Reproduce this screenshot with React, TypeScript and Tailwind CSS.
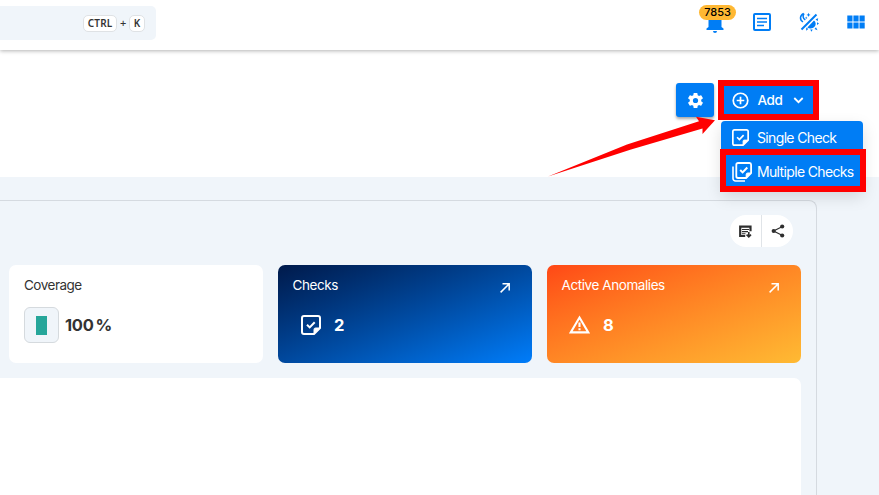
import type { ReactNode } from "react";

type IconProps = { className?: string };

function CheckNote({ className }: IconProps) {
  return (
    <svg viewBox="0 0 20 20" fill="none" stroke="currentColor" strokeWidth="2" strokeLinejoin="round" className={className}>
      <path d="M3 1h14a2 2 0 0 1 2 2v10l-6 6H3a2 2 0 0 1-2-2V3a2 2 0 0 1 2-2Z" />
      <path d="M13 19v-4.500a1.500 1.500 0 0 1 1.500-1.500H19Z" fill="currentColor" strokeWidth="1" />
      <path d="m6 9.700 2.700 2.700 5-5.200" strokeLinejoin="miter" />
    </svg>
  );
}

function StackedNote({ className }: IconProps) {
  return (
    <svg viewBox="0 0 20 20" fill="none" stroke="currentColor" strokeWidth="1.800" strokeLinejoin="round" className={className}>
      <path d="M6 1h11.500A1.700 1.700 0 0 1 19.100 2.700V11l-5 5H6a1.700 1.700 0 0 1-1.700-1.700V2.700A1.700 1.700 0 0 1 6 1Z" />
      <path d="M14.200 16v-3.500a1.500 1.500 0 0 1 1.500-1.500h3.400Z" fill="currentColor" strokeWidth="1" />
      <path d="m8.200 8 2.400 2.400 4.700-4.900" strokeLinejoin="miter" strokeWidth="2" />
      <path d="M1 4.500v12A2.500 2.500 0 0 0 3.500 19H13" strokeWidth="1.600" />
    </svg>
  );
}

function Gear({ className }: IconProps) {
  return (
    <svg viewBox="0 0 24 24" fill="currentColor" className={className}>
      <path d="M19.140 12.940c.04-.3.06-.61.06-.94 0-.32-.02-.64-.07-.94l2.030-1.580a.49.49 0 0 0 .12-.61l-1.920-3.320a.49.49 0 0 0-.59-.22l-2.390.96c-.5-.38-1.030-.7-1.620-.94l-.36-2.540a.48.48 0 0 0-.48-.41h-3.840a.48.48 0 0 0-.47.41l-.36 2.540c-.59.24-1.130.57-1.620.94l-2.390-.96a.48.48 0 0 0-.59.22L2.740 8.870a.48.48 0 0 0 .12.61l2.030 1.580c-.05.3-.09.63-.09.94s.02.64.07.94l-2.030 1.580a.49.49 0 0 0-.12.61l1.920 3.320c.12.22.37.29.59.22l2.390-.96c.5.38 1.030.7 1.620.94l.36 2.540c.05.24.24.41.48.41h3.840c.24 0 .44-.17.47-.41l.36-2.540c.59-.24 1.130-.56 1.620-.94l2.390.96c.22.08.47 0 .59-.22l1.920-3.320a.48.48 0 0 0-.12-.61l-2.010-1.580ZM12 15.300A3.300 3.300 0 1 1 12 8.700a3.300 3.300 0 0 1 0 6.600Z" />
    </svg>
  );
}

function ArrowOut() {
  return (
    <svg viewBox="0 0 12 12" fill="none" stroke="currentColor" strokeWidth="1.500" className="mt-[17px] mr-[21px] size-3 shrink-0">
      <path d="M3.500 1.800h6.700v6.700M10 2 1.600 10.400" />
    </svg>
  );
}

function ThemeIcon() {
  return (
    <svg viewBox="0 0 20 20" fill="none" stroke="currentColor" strokeWidth="1.500" className="h-5 w-5">
      <path d="M17.500 2.500 2.500 17.500" strokeWidth="2" />
      <path d="M4.800 1.500C.7 3.200.4 7.800 4 9.900M5 1.500C3.500 4 4.200 6.500 6.300 8" />
      <path d="m9.500.8.6 1.500 1.500.6-1.500.6-.6 1.500-.6-1.500-1.500-.6 1.500-.6ZM7.200 4.600l.4.900.9.400-.9.400-.4.900-.4-.9-.9-.4.900-.4Z" fill="currentColor" stroke="none" />
      <path d="m8.300 15.400 6.700-6.800c2 1.500 2.300 4.400.5 6.200s-5 2.300-7.200.6Z" fill="currentColor" stroke="none" />
      <path d="m16.500 7.300 2.700-1-.6 2.900ZM18 10.300l2 1.300-2 1.300ZM17 15.200l1.500 3-3-1.200ZM13.700 17.500l-1.200 2.300-1.300-2.300ZM9.300 17l-2.200 1.700.2-3.100Z" fill="currentColor" stroke="none" />
    </svg>
  );
}

function Key({ children }: { children: ReactNode }) {
  return (
    <kbd className="flex h-[17px] items-center rounded-[5px] border border-[#dfe2e5] bg-white px-[3.500px] font-['Noto_Sans','Open_Sans',sans-serif] text-[10px] font-semibold tracking-[0.2px] text-[#333]">
      {children}
    </kbd>
  );
}

function Header() {
  return (
    <header className="relative z-10 flex h-[50px] shrink-0 items-start justify-between bg-white shadow-[0_1px_4px_rgba(0,0,0,0.3)]">
      <div className="mt-[6px] flex h-[34px] w-[156px] items-center justify-end gap-[3px] rounded-r-[5px] bg-[#f0f5fa] pr-[11px]">
        <Key>CTRL</Key>
        <span className="font-['Noto_Sans',sans-serif] text-[11px] font-medium text-[#333]">+</span>
        <Key>K</Key>
      </div>
      <nav className="flex items-start text-[#007df5]">
        <div className="relative mr-[17px] flex h-8 w-[37px] justify-center">
          <svg viewBox="0 0 18 20" fill="currentColor" className="mt-[13px] mr-[6px] h-5 w-[18px]">
            <path d="M9 0a6.500 6.500 0 0 0-6.500 6v8L.5 15.500V17h17v-1.500l-2-1.500V6A6.500 6.500 0 0 0 9 0ZM7 18h4a2 2 0 0 1-4 0Z" />
          </svg>
          <span className="absolute top-[5px] left-0 flex h-[15px] w-[37px] items-center justify-center rounded-full bg-[#ffb833] text-[11px] font-medium text-black">7853</span>
        </div>
        <svg viewBox="0 0 18 18" fill="none" stroke="currentColor" strokeWidth="2" className="mt-[13px] mr-[28px] size-[18px]">
          <rect x="1" y="1" width="16" height="16" rx="1" />
          <path d="M4 5.500h10M4 9h10M4 12.500h7" strokeWidth="1.700" />
        </svg>
        <div className="mt-[12px] mr-[28px]"><ThemeIcon /></div>
        <svg viewBox="0 0 18 14" fill="currentColor" className="mt-[15px] mr-[14px] h-[14px] w-[18px]">
          <path d="M.3.500h5.200v6H.3Zm6.100 0h5.200v6H6.400Zm6.100 0h5.200v6h-5.200ZM.3 7.400h5.200v6H.3Zm6.100 0h5.200v6H6.400Zm6.100 0h5.200v6h-5.200Z" />
        </svg>
      </nav>
    </header>
  );
}

function Toolbar() {
  return (
    <section className="flex h-[127px] shrink-0 items-start justify-end bg-white pt-[33px] pr-[63px]">
      <button className="mr-[7px] flex h-[34px] w-[38px] items-center justify-center rounded-[3px] bg-[#007df5] text-white shadow-[0_2px_3px_rgba(0,0,0,0.35)]">
        <Gear className="size-[19px]" />
      </button>
      <div className="relative">
        <button className="flex h-[34px] w-[95px] items-center rounded-[3px] bg-[#007df5] pl-[11px] text-white">
          <svg viewBox="0 0 18 18" fill="none" stroke="currentColor" strokeWidth="1.800" className="size-[17px]">
            <circle cx="9" cy="9" r="7.700" />
            <path d="M9 5v8M5 9h8" />
          </svg>
          <span className="ml-[7px] w-[28px] text-[13.500px] font-medium tracking-[-0.4px]">Add</span>
          <svg viewBox="0 0 10 7" fill="none" stroke="currentColor" strokeWidth="1.800" className="ml-[9px] h-[7px] w-[11px]">
            <path d="m.8 1 4.200 4.200L9.200 1" />
          </svg>
        </button>
        <ul className="absolute top-[38px] left-0 z-20 flex h-[70px] w-[142px] flex-col rounded-[4px] bg-[#007df5] text-[14px] tracking-[-0.65px] whitespace-nowrap text-white shadow-[0_6px_16px_rgba(0,0,0,0.13)]">
          <li className="flex h-[33px] items-center pl-[11px]">
            <CheckNote className="mr-[8px] size-[17px] shrink-0" />
            <span>Single Check</span>
          </li>
          <li className="flex h-[35px] items-center pl-[11px]">
            <StackedNote className="mr-[5px] size-[20px] shrink-0" />
            <span>Multiple Checks</span>
          </li>
        </ul>
      </div>
    </section>
  );
}

function StatCard({ title, value, icon, gradient }: { title: string; value: string; icon: ReactNode; gradient: string }) {
  return (
    <article className={`flex h-[98px] w-[254px] justify-between rounded-[7px] text-white ${gradient}`}>
      <div className="pl-[14px]">
        <h3 className="mt-[10px] pl-[0.5px] text-[13.500px] leading-[20px] tracking-[-0.42px]">{title}</h3>
        <div className="mt-[18px] flex h-[24px] items-center pl-[8px]">
          {icon}
          <strong className="ml-[13px] text-[16.500px] leading-[22px] font-bold">{value}</strong>
        </div>
      </div>
      <ArrowOut />
    </article>
  );
}

function Dashboard() {
  return (
    <section className="h-[318px] bg-[#f0f5fa] pt-[23px]">
      <div className="h-[310px] w-[817px] rounded-tr-[8px] border-t border-r border-[#d5dae0] pt-[14px]">
        <div className="ml-[730px] flex h-[32px] w-[63px] rounded-full bg-white text-[#2e2e2e]">
          <button className="flex w-[32px] items-center justify-center border-r border-[#e0e4e8]">
            <svg viewBox="0 0 13 13" fill="none" stroke="currentColor" className="size-[13px]">
              <path d="M11.500 6.200V1.600H1.200V11h5" strokeWidth="2.200" />
              <path d="M3 4.500h7M3 6.600h6M3 8.700h3.500" strokeWidth="1.100" />
              <path d="M9.800 7v5M7.600 9.700l2.200 2.100L12 9.700" strokeWidth="1.600" />
            </svg>
          </button>
          <button className="flex w-[31px] items-center justify-center">
            <svg viewBox="0 0 14 14" fill="currentColor" className="size-[14px]">
              <path d="m2.500 7 9-4.500M2.500 7l9 4.500" stroke="currentColor" strokeWidth="1.300" />
              <circle cx="2.700" cy="7" r="2.100" />
              <circle cx="11.200" cy="2.500" r="2.100" />
              <circle cx="11.200" cy="11.500" r="2.100" />
            </svg>
          </button>
        </div>
        <div className="mt-[18px] ml-[9px] flex gap-[15px]">
          <article className="h-[98px] w-[254px] rounded-[7px] bg-white pl-[15px] text-[#333]">
            <h3 className="pt-[10px] text-[13.500px] leading-[20px] tracking-[-0.5px]">Coverage</h3>
            <div className="mt-[12px] flex items-center">
              <div className="flex h-[36px] w-[35px] items-center justify-center rounded-[6px] border border-[#d5dade] bg-[#f0f5fa]">
                <div className="h-[19px] w-[11px] bg-[#26a69a]" />
              </div>
              <strong className="ml-[6px] text-[16.500px] leading-[22px] font-bold tracking-[-0.3px] whitespace-nowrap">
                100<span className="ml-[2px]">%</span>
              </strong>
            </div>
          </article>
          <StatCard title="Checks" value="2" gradient="bg-linear-to-br from-[#001a4b] to-[#007dfa]" icon={<CheckNote className="ml-px size-[20px]" />} />
          <StatCard
            title="Active Anomalies"
            value="8"
            gradient="bg-linear-to-br from-[#ff4716] to-[#ffba33]"
            icon={
              <svg viewBox="0 0 22 19" fill="none" stroke="currentColor" strokeWidth="2.200" className="mb-[2px] h-[19px] w-[21px]">
                <path d="M11 2.200 20.200 17.800H1.800ZM11 7.300V12M11 13.300v2.200" />
              </svg>
            }
          />
        </div>
        <div className="mt-[15px] h-[125px] w-[801px] rounded-tr-[7px] bg-white" />
      </div>
    </section>
  );
}

export default function App() {
  return (
    <main className="relative flex h-[495px] w-[879px] flex-col overflow-hidden bg-white font-['Inter','Liberation_Sans',sans-serif]">
      <Header />
      <Toolbar />
      <Dashboard />
      <div className="pointer-events-none absolute top-[80px] left-[718px] z-30 h-[40px] w-[101px] border-[6px] border-[#ff0000]" />
      <div className="pointer-events-none absolute top-[149px] left-[720px] z-30 h-[43px] w-[146px] border-[6px] border-[#ff0000]" />
      <svg viewBox="0 0 170 62" className="pointer-events-none absolute top-[116px] left-[547px] z-30 h-[62px] w-[170px]">
        <path d="M1 60.500 80 28.500 152 5.200 149 .8 168 4.300 155.500 18 155.500 12.500 84 33.500Z" fill="#ff0000" />
      </svg>
    </main>
  );
}
